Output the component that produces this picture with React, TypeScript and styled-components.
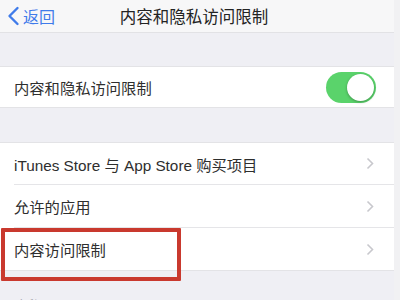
import styled, { createGlobalStyle } from 'styled-components'

const GlobalStyle = createGlobalStyle`
  html, body {
    margin: 0;
    padding: 0;
    background: #f1f1f3;
    font-family: "Liberation Sans", "Noto Sans CJK SC", sans-serif;
  }
`

const Screen = styled.div`
  position: relative;
  width: 400px;
  height: 300px;
  overflow: hidden;
  background: #f1f1f3;
`

const Page = styled.div`
  width: 394px;
  background: #efeff4;
`

const NavBar = styled.div`
  position: relative;
  height: 32px;
  display: flex;
  align-items: center;
  background: #f7f7f8;
  border-bottom: 1px solid #e2e2e5;
`

const BackButton = styled.div`
  display: flex;
  align-items: center;
  gap: 3px;
  padding-left: 7px;
  color: #3f7bea;
  font-size: 16px;
  z-index: 1;
`

const NavTitle = styled.div`
  position: absolute;
  left: 0;
  right: 0;
  text-align: center;
  font-size: 16.5px;
  color: #232323;
  padding-right: 6px;
`

const Spacer = styled.div<{ $h: number }>`
  height: ${p => p.$h}px;
`

const Group = styled.div`
  background: #fff;
  border-top: 1px solid #e3e3e6;
  border-bottom: 1px solid #e3e3e6;
`

const Row = styled.div<{ $h: number }>`
  height: ${p => p.$h}px;
  display: flex;
  align-items: center;
  margin-left: 14px;
  padding-right: 20px;
  & + & {
    border-top: 1px solid #e5e5e8;
  }
`

const Label = styled.span`
  flex: 1;
  font-size: 15.3px;
  color: #2e2e2e;
`

const Toggle = styled.div`
  position: relative;
  width: 50px;
  height: 31px;
  border-radius: 16px;
  background: #5ad36b;
  margin-right: -2px;
`

const Knob = styled.div`
  position: absolute;
  right: 2px;
  top: 2px;
  width: 27px;
  height: 27px;
  border-radius: 50%;
  background: #fff;
  box-shadow: 0 1px 3px rgba(0, 0, 0, 0.3);
`

const Footer = styled.div`
  padding: 27px 0 0 14px;
  font-size: 13px;
  line-height: 16px;
  color: #8a8a8f;
`

const Highlight = styled.div`
  position: absolute;
  left: 1px;
  top: 228px;
  width: 172px;
  height: 45px;
  border: 4px solid #c9392e;
  border-radius: 1px;
`

const Chevron = () => (
  <svg width="8" height="13" viewBox="0 0 8 13">
    <path d="M1.5 1.5 L6.5 6.5 L1.5 11.5" fill="none" stroke="#c8c8cd" strokeWidth="1.6" />
  </svg>
)

const BackChevron = () => (
  <svg width="13" height="20" viewBox="0 0 13 20">
    <path d="M10.5 2 L2.5 10 L10.5 18" fill="none" stroke="#3f7bea" strokeWidth="2.4" strokeLinecap="round" strokeLinejoin="round" />
  </svg>
)

export default function App() {
  return (
    <Screen>
      <GlobalStyle />
      <Page>
        <NavBar>
          <BackButton>
            <BackChevron />
            返回
          </BackButton>
          <NavTitle>内容和隐私访问限制</NavTitle>
        </NavBar>
        <Spacer $h={33} />
        <Group>
          <Row $h={40}>
            <Label>内容和隐私访问限制</Label>
            <Toggle>
              <Knob />
            </Toggle>
          </Row>
        </Group>
        <Spacer $h={34} />
        <Group>
          <Row $h={41}>
            <Label>iTunes Store 与 App Store 购买项目</Label>
            <Chevron />
          </Row>
          <Row $h={42}>
            <Label>允许的应用</Label>
            <Chevron />
          </Row>
          <Row $h={42}>
            <Label>内容访问限制</Label>
            <Chevron />
          </Row>
        </Group>
        <Footer>隐私</Footer>
      </Page>
      <Highlight />
    </Screen>
  )
}
